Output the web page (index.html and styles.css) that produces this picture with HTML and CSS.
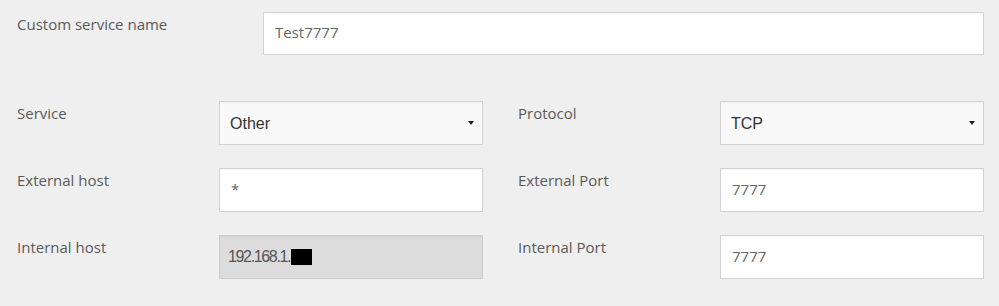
FILE: index.html
```html
<!DOCTYPE html>
<html lang="en">
<head>
<meta charset="utf-8">
<title>Port forwarding</title>
<link rel="stylesheet" href="styles.css">
</head>
<body>
<form class="form">
  <div class="wide-row">
    <label class="label wide-label" for="csn">Custom service name</label>
    <input class="control text" id="csn" type="text" value="Test7777">
  </div>
  <div class="grid">
    <div class="field">
      <label class="label" for="svc">Service</label>
      <div class="select-wrap">
        <select class="control select" id="svc"><option>Other</option></select>
      </div>
    </div>
    <div class="field">
      <label class="label" for="proto">Protocol</label>
      <div class="select-wrap">
        <select class="control select" id="proto"><option>TCP</option></select>
      </div>
    </div>
    <div class="field">
      <label class="label" for="exh">External host</label>
      <input class="control text" id="exh" type="text" value="*">
    </div>
    <div class="field">
      <label class="label" for="exp">External Port</label>
      <input class="control text" id="exp" type="text" value="7777">
    </div>
    <div class="field">
      <span class="label">Internal host</span>
      <div class="control disabled">192.168.1.<span class="redact"></span></div>
    </div>
    <div class="field">
      <label class="label" for="inp">Internal Port</label>
      <input class="control text" id="inp" type="text" value="7777">
    </div>
  </div>
</form>
</body>
</html>
```

FILE: styles.css
```css
html, body {
  margin: 0;
  padding: 0;
  background: #efefef;
}

.form {
  padding: 12px 15px 0 17px;
  font-family: "Open Sans", "Liberation Sans", sans-serif;
}

.wide-row {
  display: flex;
  align-items: flex-start;
}

.label {
  display: block;
  font-family: "Open Sans", "Liberation Sans", sans-serif;
  font-size: 15px;
  line-height: 20px;
  color: #5a5a5a;
  padding-top: 2px;
  width: 202px;
  flex: none;
}

.wide-label {
  width: 246px;
}

.control {
  box-sizing: border-box;
  height: 44px;
  margin: 0;
  border: 1px solid #d2d2d2;
  border-radius: 0;
  outline: none;
  box-shadow: inset 0 1px 1px rgba(0, 0, 0, 0.04);
}

.wide-row .control {
  flex: 1;
  height: 43px;
}

.text {
  background: #ffffff;
  padding: 0 11px 3px 11px;
  font-family: "Open Sans", "Liberation Sans", sans-serif;
  font-size: 15px;
  color: #666666;
  width: 264px;
}

.grid {
  margin-top: 46px;
  display: grid;
  grid-template-columns: 466px 466px;
  column-gap: 35px;
  row-gap: 23px;
}

.field {
  display: flex;
  align-items: flex-start;
}

.select-wrap {
  position: relative;
  width: 264px;
  height: 44px;
}

.select-wrap::after {
  content: "";
  position: absolute;
  right: 9px;
  top: 20px;
  border-top: 4px solid #1e1e1e;
  border-left: 3.5px solid transparent;
  border-right: 3.5px solid transparent;
  pointer-events: none;
}

.select {
  width: 100%;
  appearance: none;
  -webkit-appearance: none;
  background: #f9f9f9;
  padding: 0 10px;
  font-family: "Liberation Sans", Arial, sans-serif;
  font-size: 16px;
  color: #333333;
}

.disabled {
  width: 264px;
  background: #dcdcdc;
  border-color: #cdcdcd;
  padding: 0 8px;
  font-family: "Liberation Sans", Arial, sans-serif;
  font-size: 16px;
  letter-spacing: -1.35px;
  color: #555555;
  line-height: 42px;
}

.redact {
  display: inline-block;
  width: 21px;
  height: 16px;
  background: #000;
  vertical-align: -3px;
  margin-left: 1px;
}
```
